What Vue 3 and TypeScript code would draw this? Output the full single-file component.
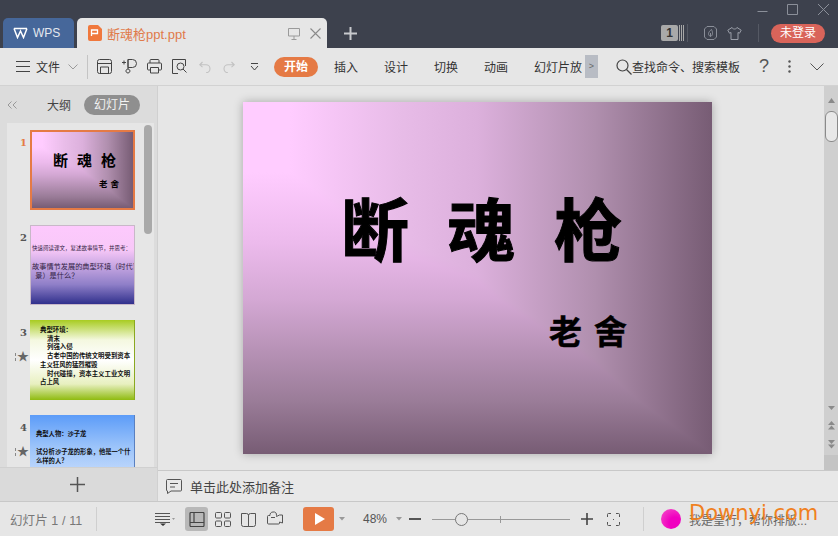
<script setup lang="ts">
const ribbonTabs: string[] = ['插入', '设计', '切换', '动画']
</script>

<template>
  <div class="app">
    <header class="titlebar">
      <div class="winbar">
        <svg width="80" height="18" viewBox="0 0 80 18" fill="none" stroke="#8b8f99" stroke-width="1">
          <path d="M2.5 11.5h10M32.5 4.5h10v10h-10zM63 4l11 11M74 4L63 15" />
        </svg>
      </div>
      <div class="tabrow">
        <div class="tab-wps">
          <svg width="15" height="12" viewBox="0 0 15 12" fill="none" stroke="#fff" stroke-width="1.5"><path d="M1 1.5l3.5 9L7.5 4l3 6.5 3.5-9M1 1.5h13" /></svg>
          <span>WPS</span>
        </div>
        <div class="tab-doc">
          <svg width="14" height="16" viewBox="0 0 14 16"><path d="M2 0h8l4 4v10a2 2 0 0 1-2 2H2a2 2 0 0 1-2-2V2a2 2 0 0 1 2-2z" fill="#f0783c"/><path d="M3.500 11V5h6v3.500h-6" fill="none" stroke="#fff" stroke-width="1.300"/></svg>
          <span class="doc-name">断魂枪ppt.ppt</span>
          <svg class="doc-screen" width="12" height="13" viewBox="0 0 12 13" fill="none" stroke="#9a9a9a"><path d="M.5 1.500h11v7.500H.5zM6 9v3M3.500 12.500h5"/></svg>
          <svg class="doc-close" width="11" height="11" viewBox="0 0 11 11" fill="none" stroke="#8a8a8a" stroke-width="1.100"><path d="M.5.5l10 10M10.500.5l-10 10"/></svg>
        </div>
        <svg class="tab-plus" width="13" height="13" viewBox="0 0 13 13" stroke="#c8c9cd" stroke-width="2"><path d="M6.500 0v13M0 6.500h13"/></svg>
        <div class="title-right">
          <div class="count-box">1</div>
          <svg width="5" height="16" viewBox="0 0 5 16" stroke="#a8a8a8"><path d="M.5 0v16M2.500 0v16M4.500 0v16"/></svg>
          <i class="dark-sep sep-a"></i>
          <svg class="leaf" width="13" height="14" viewBox="0 0 13 14" fill="none" stroke="#8b8f99"><path d="M3 .5h7L12.500 3v8L10 13.500H3L.5 11V3zM6.500 10.500c-3-1.500-2.500-4.500 1-7 1.500 3 1.500 6-1 7zM6.500 10.500V7"/></svg>
          <svg class="shirt" width="15" height="13" viewBox="0 0 15 13" fill="none" stroke="#9a9ea8"><path d="M5 .5L.8 3.200l1.700 3 1.500-.7v7h7v-7l1.500.7 1.700-3L10 .5C9.500 2.500 5.500 2.500 5 .5z"/></svg>
          <i class="dark-sep sep-b"></i>
          <div class="login">未登录</div>
        </div>
      </div>
    </header>

    <nav class="toolbar">
      <svg class="t-menu" width="14" height="11" viewBox="0 0 14 11" stroke="#444"><path d="M0 .5h14M0 5.500h14M0 10.500h14"/></svg>
      <span class="t-file">文件</span>
      <svg class="t-chev" width="10" height="6" viewBox="0 0 10 6" fill="none" stroke="#9a9a9a"><path d="M.5.500L5 5 9.500.5"/></svg>
      <i class="t-sep"></i>
      <svg class="ti i1" width="15" height="15" viewBox="0 0 15 15" fill="none" stroke="#444"><path d="M.5 2.500a2 2 0 0 1 2-2h10a2 2 0 0 1 2 2v10a2 2 0 0 1-2 2h-10a2 2 0 0 1-2-2zM.5 4.500h14M3.500 14.500V8h8v6.500"/></svg>
      <svg class="ti i2" width="15" height="15" viewBox="0 0 15 15" fill="none" stroke="#444"><path d="M0 3.500h4M2 1.500v4M6 .5h4.500a4 4 0 0 1 0 8H6zM6 .5v9.500M6 10a2 2 0 1 1-.1 0z"/></svg>
      <svg class="ti i3" width="15" height="15" viewBox="0 0 15 15" fill="none" stroke="#444"><path d="M3 4V1.500a1 1 0 0 1 1-1h7a1 1 0 0 1 1 1V4M3 11H1.500a1 1 0 0 1-1-1V5a1 1 0 0 1 1-1h12a1 1 0 0 1 1 1v5a1 1 0 0 1-1 1H12M3.500 8.500h8v5.500h-8z"/></svg>
      <svg class="ti i4" width="15" height="15" viewBox="0 0 15 15" fill="none" stroke="#444"><path d="M6 14.500H.5V.5h13V7"/><circle cx="8.500" cy="7.500" r="3.500"/><path d="M11 10l3.500 3.500"/></svg>
      <svg class="ti i5" width="12" height="12" viewBox="0 0 12 12" fill="none" stroke="#c2c2c2" stroke-width="1.100"><path d="M3.500 1L.8 3.800l2.700 2.400M1 3.800h6a4 4 0 0 1 0 8"/></svg>
      <svg class="ti i6" width="12" height="12" viewBox="0 0 12 12" fill="none" stroke="#c2c2c2" stroke-width="1.100"><path d="M8.500 1l2.700 2.800-2.700 2.400M11 3.800H5a4 4 0 0 0 0 8"/></svg>
      <svg class="ti i7" width="9" height="8" viewBox="0 0 9 8" fill="none" stroke="#444"><path d="M1 .5h7M1 3l3.500 4L8 3"/></svg>
      <div class="start-pill">开始</div>
      <span v-for="tab in ribbonTabs" :key="tab" class="r-tab">{{ tab }}</span>
      <span class="r-tab r-last">幻灯片放</span>
      <div class="more-box">&gt;</div>
      <svg class="t-search" width="16" height="16" viewBox="0 0 16 16" fill="none" stroke="#444" stroke-width="1.200"><circle cx="6.500" cy="6.500" r="5.500"/><path d="M10.500 10.500l5 5"/></svg>
      <span class="search-text">查找命令、搜索模板</span>
      <span class="t-help">?</span>
      <svg class="t-dots" width="3" height="13" viewBox="0 0 3 13" fill="#555"><circle cx="1.500" cy="1.500" r="1.200"/><circle cx="1.500" cy="6.500" r="1.200"/><circle cx="1.500" cy="11.500" r="1.200"/></svg>
      <svg class="t-down" width="14" height="8" viewBox="0 0 14 8" fill="none" stroke="#555"><path d="M.5.500L7 7 13.500.5"/></svg>
    </nav>

    <div class="workspace">
      <aside class="sidebar">
        <div class="side-head">
          <svg class="collapse" width="10" height="8" viewBox="0 0 10 8" fill="none" stroke="#999"><path d="M4.500.5L1 4l3.500 3.500M9.500.5L6 4l3.500 3.500"/></svg>
          <span class="outline">大纲</span>
          <span class="slides-pill">幻灯片</span>
        </div>
        <div class="thumbs">
          <div class="thumb-row first">
            <span class="num active">1</span>
            <div class="thumb t1">
              <div class="t1-title"><span>断</span><span>魂</span><span>枪</span></div>
              <div class="t1-sub"><span>老</span><span>舍</span></div>
            </div>
          </div>
          <div class="thumb-row">
            <span class="num">2</span>
            <div class="thumb t2">
              <p class="t2-a">快速阅读课文，复述故事情节，并思考：</p>
              <p class="t2-b">故事情节发展的典型环境（时代背<br>&nbsp;&nbsp;景）是什么？</p>
            </div>
          </div>
          <div class="thumb-row">
            <span class="num">3</span>
            <span class="star">★</span>
            <div class="thumb t3">
              <p>典型环境：</p>
              <p class="ind">清末</p>
              <p class="ind">列强入侵</p>
              <p class="ind">古老中国的传统文明受到资本</p>
              <p>主义狂风的猛烈摧毁</p>
              <p class="ind">时代碰撞，资本主义工业文明</p>
              <p>占上风</p>
            </div>
          </div>
          <div class="thumb-row">
            <span class="num">4</span>
            <span class="star">★</span>
            <div class="thumb t4">
              <p class="t4-a">典型人物：沙子龙</p>
              <p class="t4-b">试分析沙子龙的形象，他是一个什么样的人？</p>
              <p class="t4-c">他的性格是怎样的人</p>
            </div>
          </div>
          <div class="side-scroll"></div>
        </div>
        <div class="add-row">
          <svg width="15" height="15" viewBox="0 0 15 15" stroke="#555" stroke-width="1.500"><path d="M7.500 0v15M0 7.500h15"/></svg>
        </div>
      </aside>

      <main class="main">
        <div class="canvas-wrap">
          <div class="canvas">
            <section class="slide">
              <h1 class="slide-title"><span>断</span><span>魂</span><span>枪</span></h1>
              <h2 class="slide-sub"><span>老</span><span>舍</span></h2>
            </section>
          </div>
          <div class="vscroll">
            <svg class="va" width="7" height="5" viewBox="0 0 7 5" fill="#8a8a8a"><path d="M3.500 0L7 5H0z"/></svg>
            <div class="vthumb"></div>
            <svg class="vb" width="7" height="4" viewBox="0 0 7 4" fill="#8a8a8a"><path d="M0 0h7L3.500 4z"/></svg>
            <svg class="vc" width="7" height="9" viewBox="0 0 7 9" fill="#8a8a8a"><path d="M3.500 0L7 4H0zM3.500 4.500L7 8.500H0z"/></svg>
            <svg class="vd" width="7" height="9" viewBox="0 0 7 9" fill="#8a8a8a"><path d="M0 0h7L3.500 4zM0 4.500h7l-3.500 4z"/></svg>
            <div class="vsq"></div>
          </div>
        </div>
        <div class="notes">
          <svg width="16" height="15" viewBox="0 0 16 15" fill="none" stroke="#555"><path d="M1.500.5h13a1 1 0 0 1 1 1V11a1 1 0 0 1-1 1H5l-3.500 2.500V12a1 1 0 0 1-1-1V1.500a1 1 0 0 1 1-1zM4 4.500h8M4 8h5"/></svg>
          <span>单击此处添加备注</span>
        </div>
      </main>
    </div>

    <footer class="status">
      <span class="s-count">幻灯片 1 / 11</span>
      <i class="s-sep s-sep1"></i>
      <svg class="s-list" width="20" height="13" viewBox="0 0 20 13" fill="none" stroke="#555"><path d="M0 .5h15M0 3.500h15M0 6.500h15M0 9.500h15"/><path d="M5 10.500h6l-3 2.500z" fill="#333" stroke="none"/><path d="M17 5h3l-1.500 2z" fill="#999" stroke="none"/></svg>
      <div class="s-view">
        <svg width="16" height="15" viewBox="0 0 16 15" fill="none" stroke="#444" stroke-width="1.200"><path d="M1 1.500a1 1 0 0 1 1-1h12a1 1 0 0 1 1 1v12a1 1 0 0 1-1 1H2a1 1 0 0 1-1-1zM5 .5v10M1 10.500h14"/></svg>
      </div>
      <svg class="s-grid" width="16" height="15" viewBox="0 0 16 15" fill="none" stroke="#555"><rect x=".5" y=".5" width="6" height="5.500" rx="1"/><rect x="9.500" y=".5" width="6" height="5.500" rx="1"/><rect x=".5" y="9" width="6" height="5.500" rx="1"/><rect x="9.500" y="9" width="6" height="5.500" rx="1"/></svg>
      <svg class="s-book" width="15" height="15" viewBox="0 0 15 15" fill="none" stroke="#555"><path d="M.5 1.500h5a2 2 0 0 1 2 2V14.500h-5a2 2 0 0 1-2-2zM14.500 1.500h-5a2 2 0 0 0-2 2V14.500h5a2 2 0 0 0 2-2z"/></svg>
      <svg class="s-cam" width="16" height="16" viewBox="0 0 16 16" fill="none" stroke="#555"><path d="M.5 5.500a1 1 0 0 1 1-1H3a3 3 0 0 1 3-3.500h1.500a3 3 0 0 1 2 3.500v1l3 -1.500H15.500v8l-3-1v1a1 1 0 0 1-1 1h-10a1 1 0 0 1-1-1z"/><path d="M4 6.500h4"/></svg>
      <button class="play" type="button">
        <svg width="10" height="12" viewBox="0 0 10 12" fill="#fff"><path d="M0 0l10 6-10 6z"/></svg>
      </button>
      <svg class="s-caret c1" width="6" height="4" viewBox="0 0 6 4" fill="#999"><path d="M0 0h6L3 3.500z"/></svg>
      <span class="zoom-val">48%</span>
      <svg class="s-caret c2" width="6" height="4" viewBox="0 0 6 4" fill="#999"><path d="M0 0h6L3 3.500z"/></svg>
      <i class="minus"></i>
      <div class="slider">
        <i class="tick"></i>
        <i class="knob"></i>
      </div>
      <svg class="s-plus" width="12" height="12" viewBox="0 0 12 12" stroke="#444" stroke-width="1.600"><path d="M6 0v12M0 6h12"/></svg>
      <svg class="s-full" width="13" height="13" viewBox="0 0 13 13" fill="none" stroke="#555"><path d="M.5 4V1.500a1 1 0 0 1 1-1H4M9 .5h2.500a1 1 0 0 1 1 1V4M12.500 9v2.500a1 1 0 0 1-1 1H9M4 12.500H1.500a1 1 0 0 1-1-1V9"/><path d="M6 6.500h1"/></svg>
      <i class="s-sep s-sep2"></i>
      <i class="ball"></i>
      <span class="assist">我是皇行，帮你排版...</span>
      <span class="watermark">Downyi.com</span>
    </footer>
  </div>
</template>

<style scoped>
.app {
  position: relative;
  width: 838px;
  height: 536px;
  overflow: hidden;
  display: flex;
  flex-direction: column;
  background: #e6e6e6;
  color: #333;
  font-family: "Liberation Sans", "Noto Sans CJK SC", sans-serif;
  font-size: 12px;
}
p, h1, h2 { margin: 0; }

.titlebar { height: 48px; flex: none; background: #3d414d; display: flex; flex-direction: column; }
.winbar { height: 18px; display: flex; justify-content: flex-end; padding-right: 3px; }
.tabrow { height: 30px; display: flex; align-items: stretch; padding-left: 3px; }
.tab-wps {
  width: 71px; background: #46679a; border-radius: 5px 5px 0 0; color: #e4e8ef;
  display: flex; align-items: center; gap: 5px; padding-left: 10px; box-sizing: border-box; font-size: 12px;
}
.tab-doc {
  width: 250px; margin-left: 3px; background: #e6e6e6; border-radius: 5px 5px 0 0;
  display: flex; align-items: center; padding-left: 11px; box-sizing: border-box;
}
.doc-name { margin-left: 5px; color: #e07a4a; font-size: 13px; width: 181px; }
.doc-close { margin-left: 10px; }
.tab-plus { align-self: center; margin-left: 17px; }
.title-right { margin-left: auto; display: flex; align-items: center; padding-right: 13px; }
.count-box {
  width: 17px; height: 16px; background: #a9a9a9; border-radius: 2px; color: #333; font-weight: bold;
  text-align: center; font-size: 12px; line-height: 16px; margin-right: 1px;
}
.dark-sep { width: 1px; height: 18px; background: #555964; display: block; }
.sep-a { margin-left: 3px; }
.leaf { margin-left: 16px; }
.shirt { margin-left: 10px; }
.sep-b { margin-left: 16px; }
.login {
  margin-left: 12px; width: 54px; height: 19px; border-radius: 10px; background: #d9645a; color: #fff;
  text-align: center; font-size: 12px; line-height: 19px;
}

.toolbar { height: 38px; flex: none; display: flex; align-items: center; background: #e6e6e6; padding-left: 16px; color: #333; border-bottom: 1px solid #d2d2d2; box-sizing: border-box; }
.t-file { margin-left: 6px; width: 26px; }
.t-chev { margin-left: 6px; }
.t-sep { width: 1px; height: 24px; background: #c4c4c4; margin-left: 9px; display: block; }
.i1 { margin-left: 9px; }
.i2, .i3, .i4 { margin-left: 10px; }
.i5 { margin-left: 12px; }
.i6 { margin-left: 12px; }
.i7 { margin-left: 15px; }
.start-pill {
  margin-left: 15px; width: 44px; height: 20px; border-radius: 10px; background: #e57a45; color: #fff;
  text-align: center; line-height: 20px; font-weight: bold; font-size: 12px;
}
.r-tab { margin-left: 16px; width: 34px; white-space: nowrap; }
.r-last { width: 48px; }
.more-box { margin-left: 3px; width: 13px; height: 23px; background: #b8bcc4; color: #666; font-size: 9px; line-height: 23px; text-align: center; }
.t-search { margin-left: 18px; }
.search-text { margin-left: 0; white-space: nowrap; width: 108px; }
.t-help { margin-left: 18px; font-size: 18px; color: #555; width: 12px; text-align: center; }
.t-dots { margin-left: 18px; }
.t-down { margin-left: 19px; }

.workspace { flex: 1; min-height: 0; display: flex; }
.sidebar { width: 157px; flex: none; background: #dcdcdc; display: flex; flex-direction: column; border-right: 1px solid #d0d0d0; }
.side-head { height: 37px; flex: none; display: flex; align-items: center; position: relative; }
.collapse { margin-left: 7px; }
.outline { margin-left: 30px; color: #444; width: 24px; }
.slides-pill { margin-left: 13px; width: 56px; height: 20px; border-radius: 10px; background: #8f8f8f; color: #f2f2f2; text-align: center; line-height: 20px; }
.thumbs { position: relative; flex: 1; min-height: 0; overflow: hidden; margin: 0 3px 0 7px; background: #e6e6e6; display: flex; flex-direction: column; gap: 15px; padding-top: 7px; box-sizing: border-box; }
.thumb-row { position: relative; display: flex; flex: none; padding-left: 23px; }
.num { position: absolute; left: 13px; top: 6px; font-family: "DejaVu Serif", serif; font-weight: bold; font-size: 10px; line-height: 14px; color: #555; }
.num.active { color: #e57a45; }
.star { position: absolute; left: 10px; top: 30px; color: #666; font-size: 12px; line-height: 14px; }
.star::before { content: ""; position: absolute; left: -2px; top: 3px; width: 2px; height: 8px; border-left: 1px dashed #888; }
.thumb { width: 105px; height: 80px; box-sizing: border-box; overflow: hidden; font-family: "Noto Sans CJK SC", sans-serif; color: #111; flex: none; }
.t1 {
  border: 2px solid #e57a45;
  background: linear-gradient(to right, #ffccff 10%, #e8bce8 33%, #dcb0dc 50%, #b08fae 75%, #775c74 100%), linear-gradient(to bottom, #ffccff 20%, #ecbaec 40%, #d4a8d4 56%, #9a7c98 85%, #775c74 100%);
  background-blend-mode: darken;
  color: #000;
}
.t1-title { display: flex; gap: 9px; font-size: 15px; font-weight: 700; line-height: 18px; margin-top: 19px; padding-left: 21px; }
.t1-sub { display: flex; gap: 3px; font-size: 8.500px; font-weight: 700; line-height: 10px; margin-top: 9px; padding-left: 67px; }
.t2 { background: linear-gradient(to bottom, #fdc9fd 0%, #f8c8f8 30%, #8f7fc8 75%, #30308c 100%); border: 1px solid #c8b8c8; padding-top: 18px; color: #332244; }
.t2-a { font-size: 5.500px; line-height: 8px; white-space: nowrap; padding-left: 1px; }
.t2-b { font-size: 7.200px; line-height: 9px; white-space: nowrap; margin-top: 10px; padding-left: 1px; }
.t3 { background: linear-gradient(to bottom, #a8cc22 0%, #f4f8e0 25%, #ffffff 50%, #e8f0c0 80%, #8fbb10 100%); border-right: 1px solid #8aa820; padding: 6px 0 0 10px; font-size: 6.400px; font-weight: 700; line-height: 8.700px; white-space: nowrap; }
.ind { padding-left: 7px; }
.t4 { background: linear-gradient(to bottom, #5c9cf8 0%, #9cc4fa 40%, #dfeaff 100%); border-right: 1px solid #5a80c0; padding: 14px 0 0 6px; font-size: 6.300px; font-weight: 700; line-height: 9px; }
.t4-b { margin-top: 9px; width: 96px; }
.t4-c { color: #b030d0; margin-top: 2px; }
.side-scroll { position: absolute; right: 2px; top: 2px; width: 8px; height: 109px; border-radius: 4px; background: #a9a9a9; }
.add-row { height: 34px; flex: none; display: flex; align-items: center; justify-content: center; background: #dadada; border-top: 1px solid #d0d0d0; box-sizing: border-box; padding-right: 2px; }

.main { flex: 1; min-width: 0; display: flex; flex-direction: column; }
.canvas-wrap { flex: 1; min-height: 0; display: flex; }
.canvas { flex: 1; min-width: 0; display: flex; justify-content: flex-start; padding-top: 16px; padding-left: 85px; box-sizing: border-box; }
.slide {
  width: 469px; height: 352px; flex: none; box-sizing: border-box;
  background: linear-gradient(to right, #ffccff 10%, #e8bce8 33%, #dcb0dc 50%, #b08fae 75%, #775c74 100%), linear-gradient(to bottom, #ffccff 20%, #ecbaec 40%, #d4a8d4 56%, #9a7c98 85%, #775c74 100%);
  background-blend-mode: darken;
  box-shadow: 0 0 9px rgba(0,0,0,.28);
  color: #000;
  font-family: "Noto Sans CJK SC", sans-serif;
  padding-top: 84px;
}
.slide-title { display: flex; padding-left: 98px; gap: 38.500px; font-size: 68px; font-weight: 700; line-height: 82px; height: 82px; -webkit-text-stroke: 1px #000; }
.slide-sub { display: flex; padding-left: 306px; gap: 12px; font-size: 33px; font-weight: 700; line-height: 40px; margin-top: 42px; -webkit-text-stroke: .5px #000; }
.vscroll { width: 14px; flex: none; background: #cfcfcf; position: relative; display: flex; flex-direction: column; align-items: center; padding-top: 12px; box-sizing: border-box; }
.vthumb { width: 13px; height: 31px; margin-top: 8px; background: #e8e8e8; border: 1px solid #8a8a8a; border-radius: 6px; box-sizing: border-box; }
.vb { margin-top: 264px; }
.vc { margin-top: 11px; }
.vd { margin-top: 10px; }
.vsq { width: 14px; height: 15px; margin-top: auto; background: #c4c4c4; }
.notes { height: 31px; flex: none; border-top: 1px solid #c8c8c8; display: flex; align-items: center; padding-left: 8px; gap: 8px; font-size: 13px; color: #444; box-sizing: border-box; background: #e8e8e8; }

.status { height: 35px; flex: none; border-top: 1px solid #c8c8c8; display: flex; align-items: center; position: relative; padding-left: 10px; box-sizing: border-box; background: #e6e6e6; }
.s-count { color: #777; width: 85px; font-size: 12.500px; white-space: nowrap; letter-spacing: .1px; }
.s-sep { display: block; width: 1px; height: 24px; background: #cfcfcf; }
.s-sep1 { margin-left: 1px; }
.s-list { margin-left: 58px; }
.s-view { margin-left: 10px; width: 23px; height: 24px; border-radius: 3px; background: #b8b8b8; display: flex; align-items: center; justify-content: center; }
.s-grid { margin-left: 7px; }
.s-book { margin-left: 10px; }
.s-cam { margin-left: 11px; }
.play { margin-left: 20px; width: 31px; height: 24px; border: 0; padding: 0 0 0 2px; border-radius: 3px; background: #e57a45; display: flex; align-items: center; justify-content: center; }
.c1 { margin-left: 5px; }
.zoom-val { margin-left: 18px; color: #555; width: 27px; white-space: nowrap; }
.c2 { margin-left: 6px; }
.minus { display: block; margin-left: 7px; width: 12px; height: 2px; background: #555; }
.slider { margin-left: 11px; width: 138px; height: 1px; background: #999; position: relative; }
.tick { position: absolute; left: 68px; top: -3px; width: 1px; height: 7px; background: #999; }
.knob { position: absolute; left: 23px; top: -6px; width: 13px; height: 13px; box-sizing: border-box; border-radius: 50%; border: 1px solid #777; background: #e6e6e6; }
.s-plus { margin-left: 11px; }
.s-full { margin-left: 14px; }
.s-sep2 { margin-left: 23px; }
.ball { display: block; margin-left: 17px; width: 20px; height: 20px; border-radius: 50%; background: radial-gradient(circle at 70% 70%, #f000c0 30%, #f555c8 100%); }
.assist { margin-left: 8px; white-space: nowrap; color: #666; width: 116px; }
.watermark { position: absolute; left: 689px; top: -2px; font-size: 21px; line-height: 26px; color: #f08020; white-space: nowrap; font-family: "DejaVu Sans", sans-serif; }
</style>
